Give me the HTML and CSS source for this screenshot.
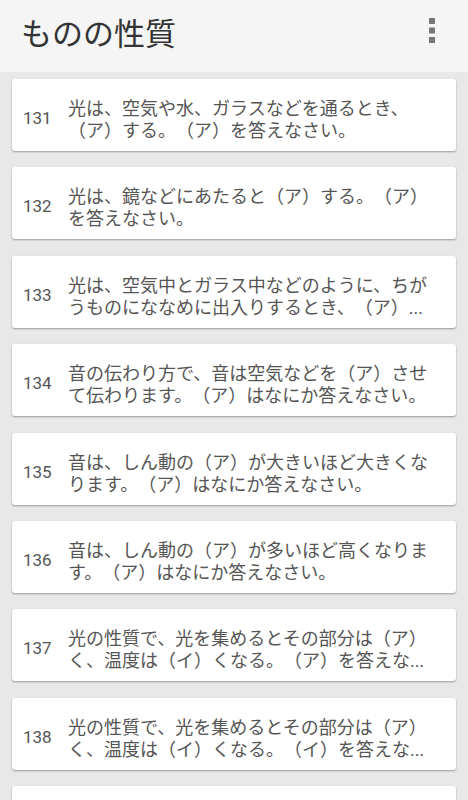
FILE: index.html
```html
<!DOCTYPE html>
<html lang="ja">
<head>
    <meta charset="UTF-8">
    <meta name="viewport" content="width=device-width, initial-scale=1.0">
    <title>ものの性質</title>
    <link rel="stylesheet" href="styles.css">
</head>
<body>
    <div class="toolbar">
        <h1 class="title">ものの性質</h1>
        <svg class="menu" width="6" height="25" viewBox="0 0 6 25">
            <rect x="0" y="0" width="6" height="6" fill="#777"/>
            <rect x="0" y="9.5" width="6" height="6" fill="#777"/>
            <rect x="0" y="19" width="6" height="6" fill="#777"/>
        </svg>
    </div>

    <div class="list">
        <div class="card">
            <div class="num">131</div>
            <div class="question">
                <div class="line">光は、空気や水、ガラスなどを通るとき、</div>
                <div class="line">（ア）する。（ア）を答えなさい。</div>
            </div>
        </div>
        <div class="card">
            <div class="num">132</div>
            <div class="question">
                <div class="line">光は、鏡などにあたると（ア）する。（ア）</div>
                <div class="line">を答えなさい。</div>
            </div>
        </div>
        <div class="card">
            <div class="num">133</div>
            <div class="question">
                <div class="line">光は、空気中とガラス中などのように、ちが</div>
                <div class="line">うものにななめに出入りするとき、（ア）...</div>
            </div>
        </div>
        <div class="card">
            <div class="num">134</div>
            <div class="question">
                <div class="line">音の伝わり方で、音は空気などを（ア）させ</div>
                <div class="line">て伝わります。（ア）はなにか答えなさい。</div>
            </div>
        </div>
        <div class="card">
            <div class="num">135</div>
            <div class="question">
                <div class="line">音は、しん動の（ア）が大きいほど大きくな</div>
                <div class="line">ります。（ア）はなにか答えなさい。</div>
            </div>
        </div>
        <div class="card">
            <div class="num">136</div>
            <div class="question">
                <div class="line">音は、しん動の（ア）が多いほど高くなりま</div>
                <div class="line">す。（ア）はなにか答えなさい。</div>
            </div>
        </div>
        <div class="card">
            <div class="num">137</div>
            <div class="question">
                <div class="line">光の性質で、光を集めるとその部分は（ア）</div>
                <div class="line">く、温度は（イ）くなる。（ア）を答えな...</div>
            </div>
        </div>
        <div class="card">
            <div class="num">138</div>
            <div class="question">
                <div class="line">光の性質で、光を集めるとその部分は（ア）</div>
                <div class="line">く、温度は（イ）くなる。（イ）を答えな...</div>
            </div>
        </div>
        <!-- next card, only its top edge shows -->
        <div class="card"></div>
    </div>
</body>
</html>
```

FILE: styles.css
```css
body {
    margin: 0;
    background-color: #e8e8e8;
    font-family: Roboto, "Noto Sans CJK JP", sans-serif;
    height: 800px;
    overflow: hidden;
}

.toolbar {
    height: 72px;
    background-color: #f5f5f5;
    display: flex;
    align-items: center;
    justify-content: space-between;
    padding: 0 33px 0 21px;
}

.title {
    margin: 0;
    font-size: 31px;
    font-weight: normal;
    color: #333;
    line-height: 1;
    padding-bottom: 4px;
}

.menu {
    margin-top: -11px;
}

.list {
    padding: 7px 12px 0 12px;
}

.card {
    display: flex;
    align-items: center;
    background-color: #fff;
    border-radius: 3px;
    box-shadow: 0 1px 2px rgba(0, 0, 0, 0.35);
    min-height: 72px;
    box-sizing: border-box;
    padding: 18px 12px 8px 11px;
    margin-bottom: 16.4px;
}

.num {
    width: 45px;
    flex-shrink: 0;
    font-size: 17px;
    color: #555;
    margin-top: -4px;
}

.question {
    font-size: 18px;
    line-height: 22px;
    color: #555;
    text-spacing-trim: space-all;
}

.line {
    white-space: nowrap;
}
```
